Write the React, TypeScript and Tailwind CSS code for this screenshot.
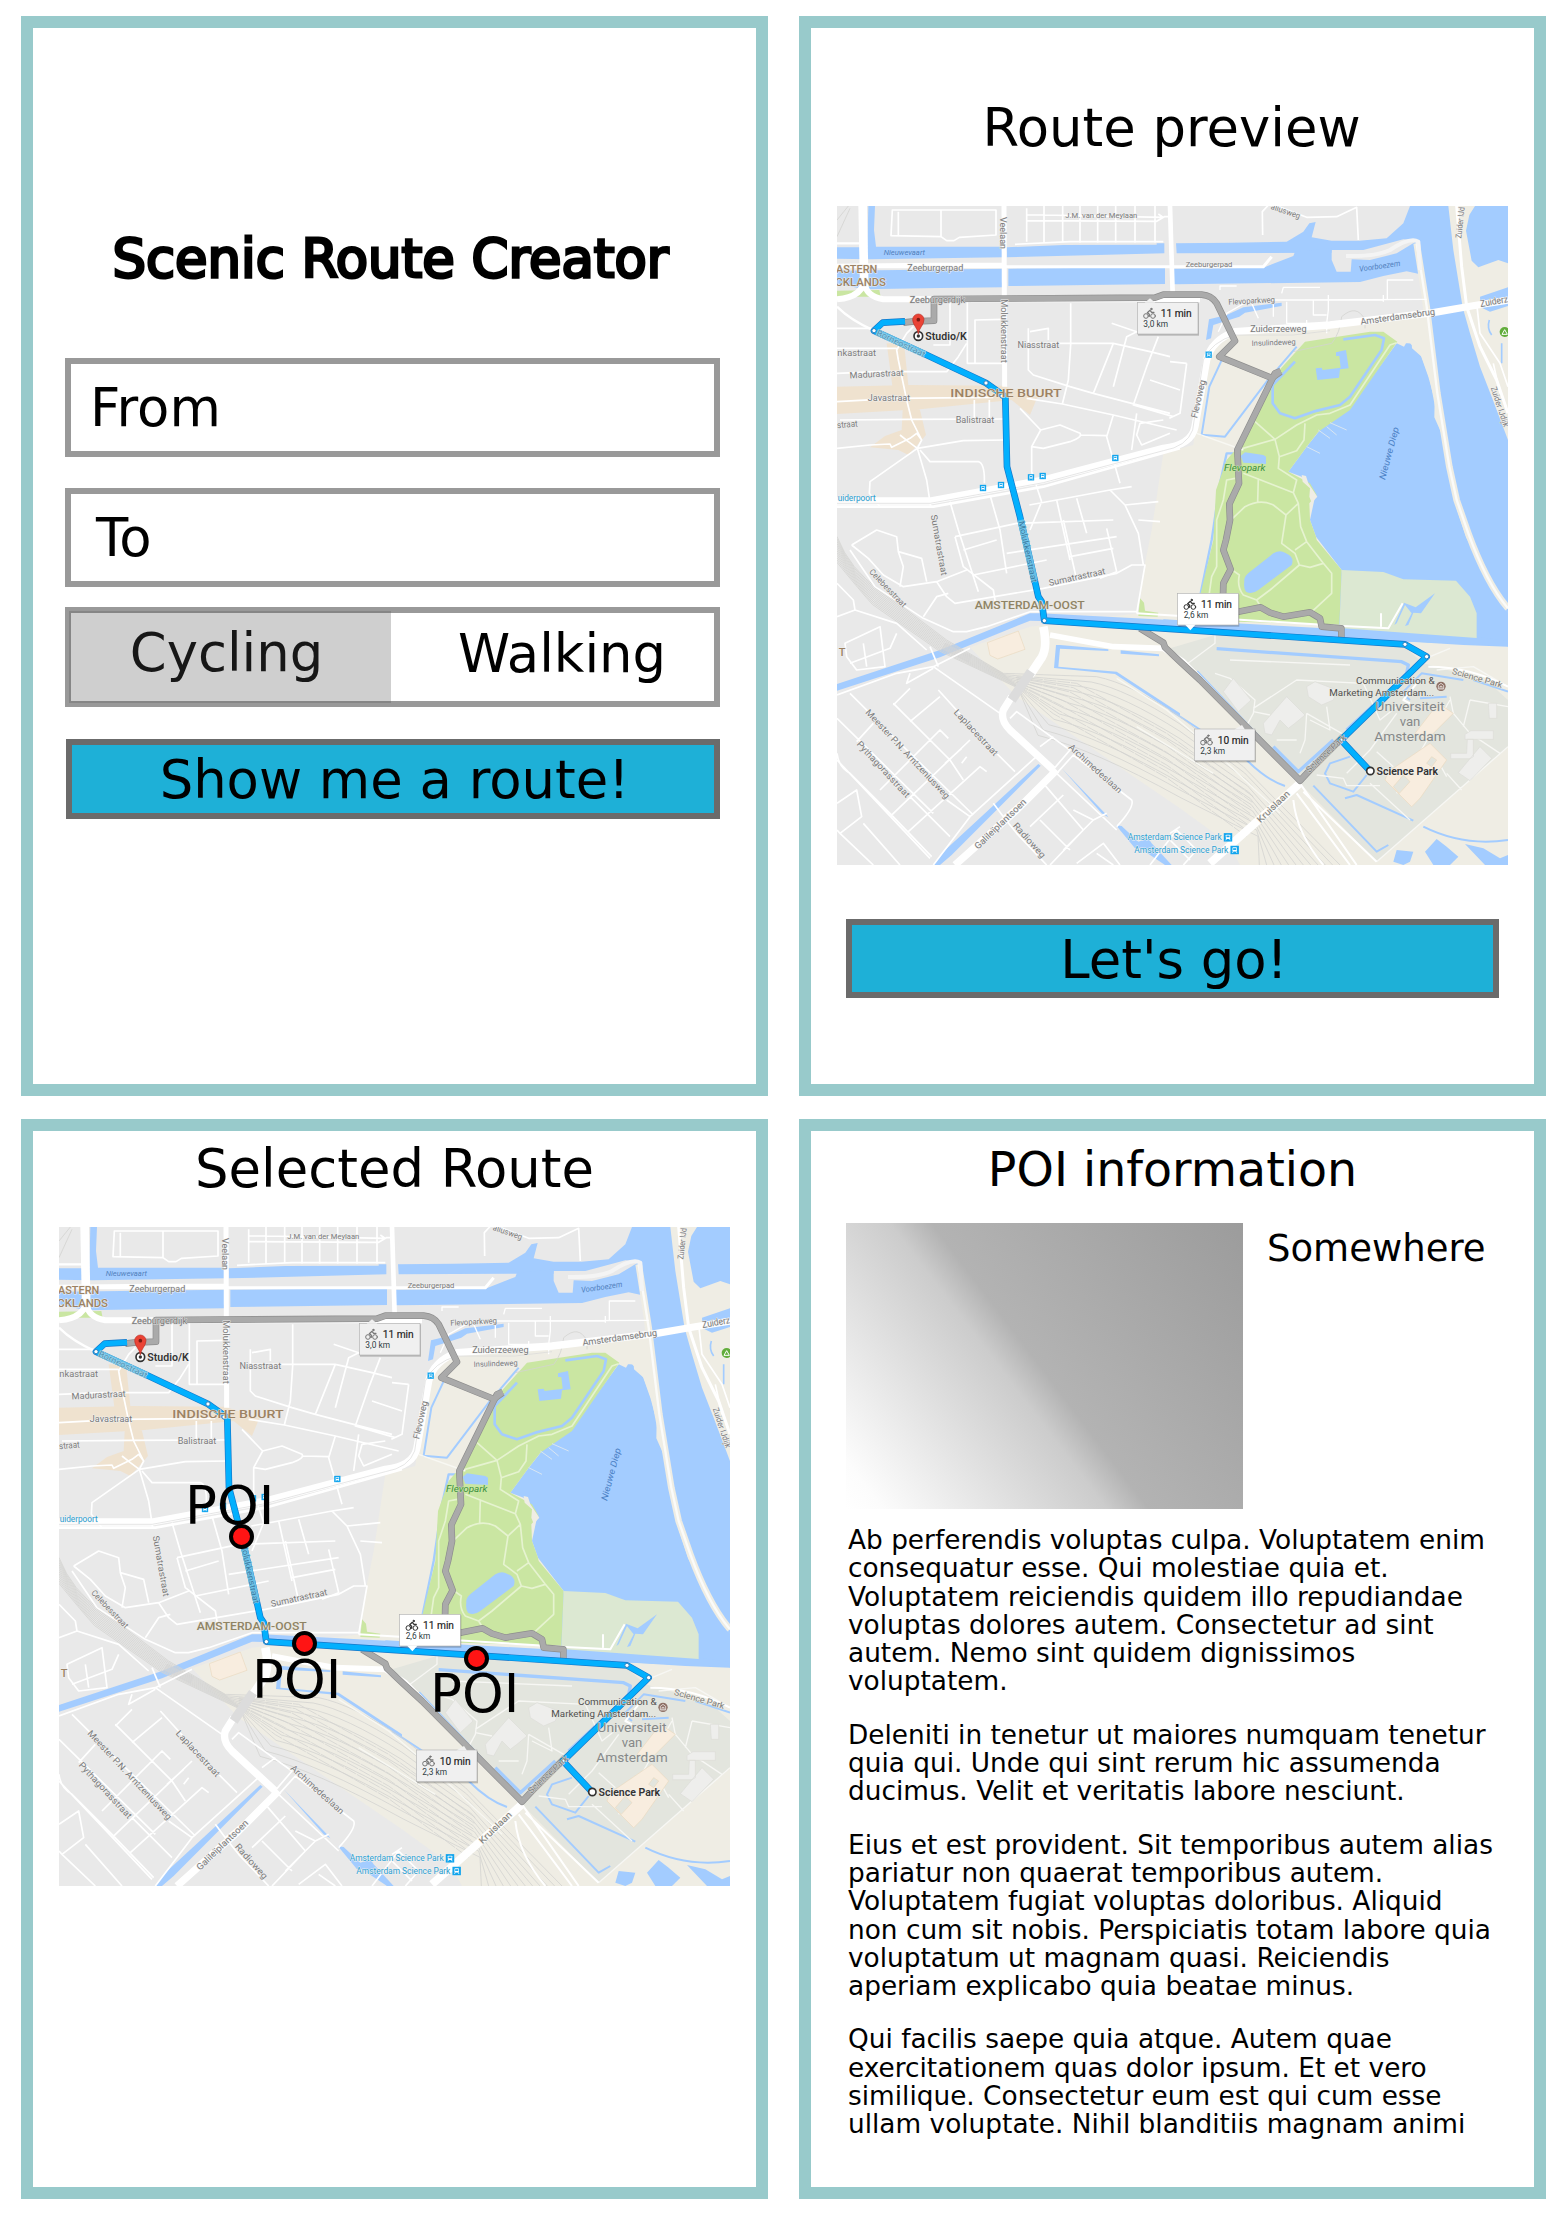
import React from 'react';

const WATER = '#a3ccff';
const BEIGE = '#efede4';
const LAND = '#e9e9e9';
const PARK = '#cae6a2';
const GREY_TEXT = '#7a7a7a';

type LabelProps = {
  x: number;
  y: number;
  w: number;
  text: string;
  size?: number;
  rot?: number;
  fill?: string;
  weight?: number;
  italic?: boolean;
  halo?: string;
};

/* A map label centred on (x, y), stretched to the width w. */
function Label({ x, y, w, text, size = 27, rot = 0, fill = GREY_TEXT, weight = 400, italic, halo = '#f0f0f0' }: LabelProps) {
  return (
    <text
      transform={`translate(${x} ${y}) rotate(${rot})`}
      textAnchor="middle"
      dominantBaseline="central"
      fontSize={size}
      fontWeight={weight}
      fontStyle={italic ? 'italic' : 'normal'}
      fill={fill}
      stroke={halo}
      strokeWidth={3}
      paintOrder="stroke"
      strokeLinejoin="round"
      textLength={w}
      lengthAdjust="spacingAndGlyphs"
    >
      {text}
    </text>
  );
}

function Bike({ x, y, color }: { x: number; y: number; color: string }) {
  return (
    <g transform={`translate(${x} ${y})`} fill="none" stroke={color} strokeWidth={3} strokeLinecap="round" strokeLinejoin="round">
      <circle cx="7" cy="23" r="7" />
      <circle cx="28" cy="23" r="7" />
      <path d="M17 24 V18 L11 13 L19 6 L24 12 H31" strokeWidth={3.8} />
      <circle cx="23" cy="2" r="2.2" fill={color} />
    </g>
  );
}

function Popup({ x, y, time, dist, active, pointer }: { x: number; y: number; time: string; dist: string; active?: boolean; pointer: string }) {
  const bg = active ? '#ffffff' : '#f0f0f0';
  return (
    <g transform={`translate(${x} ${y})`}>
      <rect x="2" y="3" width="183" height="97" fill="#000" opacity=".22" />
      <rect width="182" height="95" fill={bg} stroke="#b3b3b3" strokeWidth="2" />
      <path d={pointer} fill={bg} />
      <Bike x={19} y={18} color={active ? '#333' : '#777'} />
      <text x="70" y="45" fontSize="31" fill="#222" stroke="#222" strokeWidth=".5" textLength="93" lengthAdjust="spacingAndGlyphs">{time}</text>
      <text x="18" y="74" fontSize="25" fill="#2d3c42" textLength="74" lengthAdjust="spacingAndGlyphs">{dist}</text>
    </g>
  );
}

function Transit({ x, y, s = 18 }: { x: number; y: number; s?: number }) {
  return (
    <g transform={`translate(${x} ${y}) scale(${s / 18})`}>
      <rect x="-9.5" y="-9.5" width="19" height="19" fill="#12a5ee" />
      <rect x="-5" y="-6" width="10" height="9.5" rx="1.5" fill="#fff" />
      <rect x="-3.5" y="-4" width="7" height="3.8" fill="#12a5ee" />
      <path d="M-5 6.5 L-3 3 M5 6.5 L3 3" stroke="#fff" strokeWidth="1.8" />
    </g>
  );
}

const TRACKS = [0, 1, 2, 3, 4, 5, 6, 7, 8, 9, 10, 11];

/* Street map of Amsterdam-Oost, drawn at three units per pixel. */
function RouteMap() {
  return (
    <svg viewBox="21 18 2013 1977" width="671" height="659" className="block h-[659px] w-[671px] shrink-0 overflow-hidden" fontFamily="Roboto, sans-serif" fill="none">
      <rect x="21" y="18" width="2013" height="1977" fill={LAND} />

      {/* open ground */}
      <path fill={BEIGE} d="M1000 760 L1090 735 L1120 470 L1160 425 L1230 400 L1500 375 L1800 335 L1765 18 H2034 V1995 H1230 L1195 1930 L1050 1825 L560 1490 L420 1342 L600 1280 L925 1240 L945 1090 L965 990Z" />
      <path fill="#efe2cf" d="M21 560 L240 555 L520 557 L622 592 L600 645 L575 625 L545 600 L270 628 L21 642Z M170 430 H222 L235 555 L270 630 L288 705 L262 735 L235 765 L205 750 L120 742 L165 708 L215 690 L218 630 L190 580Z" />
      <path fill={PARK} d="M21 272 L148 270 L152 290 H21Z M930 1195 L942 1208 L945 1232 L985 1238 L983 1250 L925 1248Z" />

      {/* university campus */}
      <path fill="#e3e5de" d="M1020 1345 L1155 1305 L1720 1338 L1780 1390 L1960 1440 L1990 1460 L2034 1500 L2034 1640 L1640 1985 L1420 1760 L1380 1720Z" />

      {/* water */}
      <g fill={WATER}>
        <path d="M115 18 H135 L132 90 L138 140 H520 V172 L120 178 L21 176 V142 H112Z" />
        <path d="M530 142 L700 135 L980 134 V130 H1003 V160 L530 172Z" />
        <path d="M1038 130 L1205 128 L1370 125 L1420 95 L1438 70 L1457 66 L1445 112 L1505 122 H1588 L1670 115 L1720 70 L1740 18 H1855 L1870 150 L1898 322 L1920 400 L1950 500 L1985 590 L2034 720 V1340 L1960 1260 L1850 900 L1818 600 L1785 310 L1768 120 L1720 118 L1600 150 H1505 V158 L1040 160Z" />
        <path d="M21 212 L520 206 V262 L330 264 L100 268 L21 250Z M535 206 L1005 202 V252 L535 258Z" />
        <path d="M1040 206 L1300 203 L1390 168 L1395 155 L1505 145 V180 L1520 215 H1562 L1565 178 L1620 180 L1700 160 L1757 125 L1768 222 L1730 214 L1660 228 L1590 246 L1040 253 L1020 252 V206Z" />
        <path d="M1935 18 H2034 V190 L2005 180 L1945 202 L1925 182 L1908 92 L1918 45Z M1950 290 L2034 262 V318 L1980 335 L1952 322Z" />
        <path d="M1137 358 L1190 345 L1240 322 L1355 308 V318 L1245 338 L1228 350 L1150 375 L1143 415 L1128 420Z" />
        <path d="M1700 430 L1722 440 L1728 430 H1745 L1746 445 L1775 470 L1800 540 L1815 620 L1835 700 L1870 850 L1875 920 L1905 990 L2034 1235 V1340 L1900 1335 L1500 1310 L1535 1110 L1458 1010 L1440 960 L1455 890 L1415 830 L1375 815 L1430 740 L1470 690 L1560 620 L1620 540Z" />
        <path d="M21 1452 L330 1350 L600 1240 L630 1240 L1020 1260 L2034 1338 V1338 L1020 1292 L660 1264 L600 1262 L330 1372 L21 1472Z" />
        <path d="M1000 1258 L1940 1310 L2034 1322 V1338 L1000 1288Z" />
        <path d="M678 1335 H690 L835 1348 V1353 L690 1346 L685 1400 L860 1415 L1050 1540 V1550 L855 1422 L672 1404Z M872 1351 L987 1363 V1369 L872 1361Z" />
        <path d="M625 1692 L632 1697 L365 1965 L330 1995 H310 L340 1955Z M695 1705 L830 1845 L835 1852 L815 1840Z M858 1876 L875 1878 L925 1925 L955 1915 L965 1930 L1025 1995 H1005 L930 1945 L915 1945Z" />
        <path d="M1820 1917 L1850 1940 L1885 1970 L1860 1995 H1810 L1785 1955Z M1905 1932 L1960 1945 L2010 1975 L2034 1965 V1995 H1965Z M1700 1950 L1750 1955 L1740 1985 L1720 1995 L1690 1985Z" />
      </g>
      <g stroke={WATER} strokeWidth="8" strokeLinejoin="round">
        <path d="M1400 440 L1310 545 L1185 710 L1115 704 L1138 560 L1180 470" strokeWidth="6" />
        <path d="M1210 760 L1190 760 L1170 850 L1145 1020 L1112 1180" strokeWidth="7" />
        <path d="M1160 1346 L1715 1385 L1735 1395 L1730 1420 L1680 1470 L1550 1590 M1510 1620 L1405 1715 L1330 1640 M1100 1415 L1290 1615" strokeWidth="10" />
        <path d="M1740 1500 L1715 1480 L1775 1420 L1900 1440 M1770 1495 L1850 1490 M1930 1440 L2034 1475" strokeWidth="6" />
        <path d="M1560 1670 L1500 1690 L1485 1720 L1500 1750 L1570 1775 L1610 1725 M1545 1795 L1580 1785 L1750 1862 M1780 1880 Q1900 1940 2034 1920 M1450 1757 L1640 1955 L1675 1935 M1250 1680 Q1310 1740 1365 1758 M1020 1530 L1250 1680" strokeWidth="6" />
        <path d="M1978 360 Q1970 385 1985 405 M2015 430 V490" strokeWidth="5" />
      </g>
      {/* spit of land between both waters */}
      <path fill={BEIGE} d="M1765 120 L1785 310 L1820 560 L1850 780 L1885 900 L1925 1020 L2034 1240 L1908 1012 L1872 900 L1870 855 L1850 780 L1848 735 L1830 690 L1813 652 L1814 600 L1795 530 L1770 460 L1740 430 L1700 425 L1640 395 L1780 345Z" />
      <path d="M1760 130 L1790 320 L1822 580 L1858 800 L1880 900 L1915 1000 Q1970 1150 2034 1225" stroke={BEIGE} strokeWidth="20" />
      <path d="M1760 130 L1790 320 L1822 580 L1858 800 L1880 900 L1915 1000 Q1970 1150 2034 1225" stroke="#fbfbf9" strokeWidth="7" />

      {/* parks */}
      <path fill={PARK} d="M1425 425 L1620 395 L1660 395 L1702 425 L1560 630 L1465 695 L1430 740 L1375 815 L1440 850 L1460 885 L1438 910 L1440 960 L1458 1010 L1460 1020 L1535 1110 L1528 1275 L1225 1265 L1112 1180 L1150 1020 L1158 870 L1190 780 L1220 745 L1320 560 L1330 530Z" />
      <path fill="#dce8d2" d="M1535 1110 L1660 1116 L1720 1138 L1878 1142 L1920 1190 L1940 1240 V1314 L1528 1284Z" />
      <g fill={WATER}>
        <path d="M1518 457 L1548 450 L1556 505 L1530 508 L1527 533 L1462 540 L1457 505 L1475 503 L1478 510 L1532 503 L1528 468 L1518 468Z" />
        <path d="M1232 768 L1245 757 L1300 765 L1308 770 V792 L1240 788Z" />
        <path d="M1243 1145 Q1240 1130 1260 1115 L1330 1060 Q1350 1048 1365 1058 Q1395 1070 1385 1095 L1285 1170 Q1265 1185 1248 1175 Q1240 1165 1243 1145Z" />
        <path d="M1722 1208 L1757 1222 L1815 1180 L1773 1240 L1750 1238 L1735 1275 L1725 1278 L1745 1240 L1725 1215 L1700 1270 L1693 1275Z" />
      </g>
      <path fill={BEIGE} d="M1415 825 L1428 828 L1435 850 L1462 890 L1445 908 L1438 890 L1440 865 L1418 845Z" />
      <path d="M1540 418 L1635 405 L1662 415 L1655 450 L1560 590 L1530 615 L1450 635 L1395 655 L1350 640 L1328 610 L1328 555 L1395 485" stroke={WATER} strokeWidth="8" strokeLinejoin="round" />
      <g stroke="#e6f3d0" strokeWidth="5" strokeLinejoin="round">
        <path d="M1700 428 L1680 435 L1560 615 L1500 640 L1460 645 L1400 675 L1335 718 L1228 748 M1275 665 L1335 718 L1348 770 L1400 752 L1422 720 L1425 670 M1348 770 L1345 805 L1400 840 L1390 878 L1240 820 M1285 835 L1283 905 M1390 878 L1405 910 L1368 945 L1330 915 Q1290 895 1245 920 L1208 955 M1405 910 L1412 980 L1430 1025 L1480 1090 L1505 1120 V1180 L1440 1240 M1368 945 L1355 1030 L1395 1060 L1408 1095 L1320 1170 L1280 1200 L1240 1185 Q1220 1160 1228 1125 L1200 1105 M1408 1095 L1440 1102 L1480 1090 M1395 1050 L1430 1025 M1215 835 L1190 840 L1180 900 L1160 960 V1100 L1145 1130 L1138 1180 M1280 1200 L1295 1225" />
        <path d="M1465 690 L1500 715 M1490 680 L1520 705 M1500 668 L1550 690 M1430 740 L1470 760" stroke="#d9e6f2" strokeWidth="3" />
      </g>

      {/* railway yard */}
      <g stroke="#d3d3d1" strokeWidth="2.4">
        {TRACKS.map((i) => (
          <path
            key={i}
            d={`M21 ${1010 + i * 7} Q${60 + i * 3} ${1110 + i * 6} ${150 - i * 2} ${1170 + i * 4} L${350 - i * 2} ${1320 + i * 3} L${520 + i * 4} ${1420 + i * 4} L${800 - i * 16} ${1430 + i * 16} Q${900 - i * 10} ${1450 + i * 18} 1050 ${1550 + i * 22} L${1240 + i * 4} ${1700 + i * 19} L${1530 - i * 22} 1995`}
          />
        ))}
        {TRACKS.slice(0, 8).map((i) => (
          <path key={i} d={`M560 ${1430 + i * 4} L${740 - i * 10} ${1450 + i * 13} L1010 ${1600 + i * 19} L${1270 - i * 3} ${1790 + i * 17}`} strokeDasharray="38 3" />
        ))}
        <path d="M1390 455 L1505 430 Q1530 400 1535 350 Q1580 310 1605 360 V385 M21 60 L55 18 M21 110 L60 25" />
      </g>
      <path d="M340 1338 L420 1378" stroke="#d3d3d3" strokeWidth="22" opacity=".5" />

      {/* minor streets */}
      <g stroke="#fff" strokeWidth="5" strokeLinejoin="round">
        <path d="M185 30 H498 V105 L388 112 L372 122 H350 L333 110 L183 107 L187 30 M333 110 V30 M205 35 V108 M590 45 H640 L1000 52 L985 42 M590 62 L980 64 L1003 50 H1020 M590 25 V125 M642 18 V128 M698 18 V128 M750 18 V128 M803 18 V128 M857 18 V128 M915 18 V128 M975 18 V128 M555 133 L720 125 H1000" />
        <path d="M1298 105 L1297 35 L1320 10 L1430 52 L1520 50 L1580 22 L1585 120" />
        <path d="M21 385 H125 M21 445 H200 M21 520 L150 515 H300 L350 515 L385 470 L410 430 M21 605 L200 595 L490 592 M30 660 L240 658 L520 657 M21 745 L120 735 L180 732 L185 742 L240 715 L260 700 L275 720 L262 745 L235 725 L210 705 M262 745 L400 722 L525 720 M275 720 L245 660 L230 600 L205 480 L200 450 L230 400 L250 380" />
        <path d="M262 745 L120 845 L118 880 L150 920 M262 745 L290 840 L302 920 M270 750 L300 785 H445 Q465 790 463 850 M360 305 V435 H310 M412 305 V490 H520 M435 490 V360 L520 358 M433 600 V655 M478 600 V655 M600 395 L655 385 V420 M595 385 V510 L610 525 L720 560 L790 580 L850 430 L735 430 L600 430 M722 310 L722 435 L715 540 L697 612 L850 645 L1040 690 M697 612 L590 595 M570 625 L632 690 L690 675 L750 700 Q758 712 720 725 L640 745 L605 740 M632 690 L605 740 V815 L635 905 M750 705 L830 707 M850 645 L830 710 L870 850 M850 430 L960 455 L1020 470 M790 580 L1020 640 M920 640 L905 750 M845 370 L920 395 L890 410 L850 560 M985 410 L950 500 L910 615 L1030 650 M960 540 L1050 570 M1000 660 L930 670 L920 705 L935 735 L1020 700 M1070 490 L1050 640 L1018 655 M1020 485 L1070 490" />
        <path d="M598 915 L680 900 L840 870 L905 860 M680 900 L720 1080 M740 895 L770 1000 M635 905 L600 990 M840 870 L885 915 L925 1000 L940 1095 M885 915 L985 905 M925 960 L990 965 M480 885 L510 990 L530 1120 M360 905 L385 990 L445 1175 M375 1010 L560 970 L850 960 M400 1050 L500 1020 M430 1125 L650 1080 M530 1060 L860 1010 M700 960 L740 1140 M830 985 L860 1115 L810 1135 M720 1070 L850 1045" />
        <path d="M65 1035 L115 1075 L160 1125 L220 1160 L320 1145 L410 1110 M65 1035 L140 990 L200 1010 L205 1055 L275 1075 L290 1145 M205 1055 L220 1100 L210 1160 M320 1145 L350 1190 L375 1210 L640 1165 L860 1120 L905 1095 H945 L920 1240 M280 1250 L320 1190 L355 1180 M375 1010 L400 1100 L490 1170 L500 1230 M60 1050 L135 1160 L280 1255 L370 1295 H410 L470 1280 L600 1235 H920" />
        <path d="M21 1150 L70 1200 L75 1230 L21 1250 M75 1230 L200 1270 L290 1350 M45 1330 L150 1280 L165 1400 L80 1410 L50 1370Z M60 1390 L180 1345 L200 1300 M100 1330 L110 1400 M21 1485 L200 1420 L310 1400 L420 1345 M300 1340 L325 1400 M240 1420 L230 1450 L310 1405" />
        <path d="M310 1400 L510 1540 M21 1555 L310 1840 M60 1480 L200 1620 L430 1845 M190 1510 L360 1680 L400 1740 M240 1565 L330 1490 M325 1470 L470 1630 L555 1715 M21 1660 Q25 1700 60 1720 L180 1840 L305 1970 M21 1680 L300 1975 M21 1810 L80 1770 L95 1850 L30 1900 M30 1900 L130 1995 M30 1900 L21 1890 M100 1870 L210 1995 M190 1515 L240 1465 M80 1625 L130 1570 M345 1690 L395 1645 M150 1770 L330 1590 L355 1615 M180 1850 L420 1620 M235 1895 L450 1700 L470 1715 M240 1790 L360 1910 M350 1800 L420 1850 L630 1660 M395 1690 L410 1670 M310 1995 L420 1850 M490 1810 L520 1850 L560 1900 L650 1995 M520 1850 L640 1750 L760 1890 L660 1995 M640 1750 L640 1760 M600 1880 L700 1785 M630 1860 L720 1950 M660 1720 L720 1650 L650 1600 L560 1535 L540 1555 M630 1640 L670 1610 M680 1720 L730 1665 L905 1800 Q915 1820 860 1880 M680 1720 L860 1890 M730 1830 L790 1860 L700 1950 M790 1860 L830 1840 M740 1990 L820 1930 L870 1995 M960 1995 L1040 1890 L1100 1950 L1060 1995 M1020 1920 L1080 1980 M800 1960 L850 1995 M1050 1880 L1020 1900" />
        <path d="M1165 395 L1190 340 L1260 300 H1400 L1790 298 M1170 270 V258 H1220 M1355 280 L1360 262 H1470 M1672 300 V240 H1750 M1660 285 V305 M1495 285 V330 L1490 370 H1370 V305 M1450 300 V345 H1490 M1430 370 V360 M1265 310 L1285 355 M1330 310 V350 M1490 370 V400" strokeWidth="4" />
        <path d="M1548 168 Q1640 170 1680 150 Q1740 110 1765 125 L1770 210" strokeWidth="12" stroke="#f4f4f4" />
        <path d="M1155 1420 L1200 1435 L1275 1500 L1270 1540 L1210 1650 M1270 1525 L1400 1440 L1600 1450 M1270 1535 L1320 1545 M1200 1380 L1560 1395 M1155 1300 V1330 L1060 1400 M1430 1540 L1535 1600 M1490 1520 L1500 1590 L1440 1560 M1430 1540 L1425 1620 L1410 1660 M1600 1450 L1650 1560 L1700 1520 M1340 1620 L1400 1620 M1820 1410 L1930 1400 L2034 1460 M1800 1370 L1860 1345 M1860 1490 L1870 1540 L1920 1600 L2010 1660 M1920 1500 L1900 1580 M1920 1500 L2034 1520 M1640 1985 L2034 1640 M1550 1720 L1620 1650 L1700 1540 M1640 1655 L1690 1700 M1620 1750 L1740 1860 M1700 1780 L1860 1500 M1460 1725 L1540 1735 L1550 1757 H1650 M1850 1720 L1895 1770 M1800 1640 L1850 1730" strokeWidth="4" stroke="#f7f7f4" />
        <path d="M1410 1750 L1580 1995 M1400 1780 L1560 1995 M1420 1775 L1640 1985 M1390 1800 Q1400 1900 1480 1995 M920 1240 L1540 1278 L1675 1285 L1718 1210 M1653 1240 V1280 M1795 1400 Q1920 1400 2034 1460 M1760 1450 L1720 1500 L1740 1510" strokeWidth="6" />
        <path d="M1940 310 L1950 400 L2010 490 L2034 560 M1990 490 L2010 580" />
        <path d="M1100 700 L1240 750 M920 1580 L1150 1720 M860 1435 L1010 1530 L1150 1650 L1350 1840" stroke="#f8f8f3" strokeWidth="4" />
      </g>
      {/* main roads */}
      <g stroke="#fff" strokeLinejoin="round">
        <path d="M98 18 L103 270" strokeWidth="26" />
        <path d="M103 230 Q105 290 21 298 M103 250 Q110 290 160 298 H1110" strokeWidth="18" />
        <path d="M21 320 Q60 360 132 392 M21 130 H100" strokeWidth="7" />
        <path d="M522 18 L524 560" strokeWidth="15" />
        <path d="M1020 18 L1028 280" strokeWidth="14" />
        <path d="M21 200 H1300 L1325 170 M21 196 L300 193 H520" strokeWidth="9" />
        <path d="M21 903 H300 L640 840 L1000 745 Q1085 735 1095 680 L1130 480 Q1145 420 1215 395 L1500 375 L1810 338 L1925 318 L2034 300" strokeWidth="22" />
        <path d="M21 920 H310 L640 860 L1050 745" strokeWidth="8" />
        <path d="M1880 18 L1895 200 L1910 320 L1950 440 L2000 540 L2034 640" strokeWidth="9" />
        <path d="M640 1280 Q655 1350 630 1380 L600 1425" strokeWidth="26" />
        <path d="M660 1305 L850 1340 L1000 1345 L1060 1385 L1410 1745" strokeWidth="17" />
        <path d="M545 1490 L520 1530 Q510 1560 540 1590 L670 1710" strokeWidth="22" />
        <path d="M680 1710 L560 1830 L375 1995" strokeWidth="22" />
        <path d="M1410 1750 L1140 1990" strokeWidth="24" />
      </g>
      <path d="M603 1415 L545 1500" stroke="#dcdcdc" strokeWidth="28" />
      <path d="M21 910 H300 L640 848 L1000 752 Q1070 740 1088 690 L1120 480 Q1145 425 1215 405 L1390 405 L1500 392" stroke="#d9d9d9" strokeWidth="2" />

      {/* campus buildings */}
      <g fill="#eeeeec" stroke="#dcdcd8" strokeWidth="2">
        <path d="M1210 1435 L1263 1500 L1225 1535 L1180 1475Z M1300 1570 L1370 1490 L1410 1530 L1425 1545 L1395 1570 L1375 1585 L1350 1560 L1325 1605 L1305 1600Z M1430 1460 L1455 1445 L1520 1470 L1510 1500 L1475 1515 L1435 1490Z M1975 1510 H2000 V1555 H1978Z M1923 1592 H1990 V1618 H1905 V1603Z M1912 1618 H1930 V1670 L1920 1676 H1862 V1660 H1910Z M1950 1640 L1985 1675 L1920 1742 L1885 1718Z" />
      </g>
      <g fill="#f8eddf" stroke="#ead9c0" strokeWidth="2">
        <path d="M472 1328 L565 1293 L585 1348 L503 1377 L480 1366Z M1825 1510 L1870 1540 L1790 1620 L1755 1600Z M1800 1630 L1850 1680 L1770 1795 L1745 1820 L1665 1740 L1675 1715Z" />
      </g>
      <path fill="#e3e5de" stroke="#ead9c0" strokeWidth="2" d="M1790 1690 L1805 1670 L1820 1680 L1805 1700Z M1690 1760 L1720 1725 L1740 1745 L1708 1780Z" />

      {/* alternative routes */}
      <g strokeLinejoin="round">
        <g stroke="#8d8d8d" strokeWidth="20">
          <path d="M220 368 L245 365 L312 362 V297 L975 293 L1000 284 H1115 Q1145 286 1160 310 L1215 423 L1168 470 L1325 534 L1352 515" />
          <path d="M1352 513 L1335 520 L1222 750 L1227 850 L1198 912 L1200 960 L1188 1020 L1180 1050 L1202 1108 L1180 1150 L1178 1235 H1225 L1292 1222 L1320 1238 L1360 1250 L1440 1237 L1470 1255 L1475 1280 L1534 1285 V1315" />
          <path d="M930 1285 L1000 1328 L1005 1342 L1050 1385 L1110 1440 L1410 1742 L1440 1710 L1540 1610" />
        </g>
        <g stroke="#aaaaaa" strokeWidth="16">
          <path d="M220 368 L245 365 L312 362 V297 L975 293 L1000 284 H1115 Q1145 286 1160 310 L1215 423 L1168 470 L1325 534 L1352 515" />
          <path d="M1352 513 L1335 520 L1222 750 L1227 850 L1198 912 L1200 960 L1188 1020 L1180 1050 L1202 1108 L1180 1150 L1178 1235 H1225 L1292 1222 L1320 1238 L1360 1250 L1440 1237 L1470 1255 L1475 1280 L1534 1285 V1315" />
          <path d="M930 1285 L1000 1328 L1005 1342 L1050 1385 L1110 1440 L1410 1742 L1440 1710 L1540 1610" />
        </g>
      </g>
      {/* chosen route */}
      <g strokeLinejoin="round">
        <g stroke="#1577c9" strokeWidth="20">
          <path d="M225 364 L158 368 L132 392 L290 465 L468 549 L526 590 L531 800 L570 950 L615 1145 L625 1190 L635 1205 L643 1262 L1725 1333 L1790 1370 L1533 1620 L1620 1713" />
        </g>
        <g stroke="#03b0fe" strokeWidth="16">
          <path d="M225 364 L158 368 L132 392 L290 465 L468 549 L526 590 L531 800 L570 950 L615 1145 L625 1190 L635 1205 L643 1262 L1725 1333 L1790 1370 L1533 1620 L1620 1713" />
        </g>
        <path d="M140 396 L285 463 M572 960 L613 1140" stroke="#62bfe6" strokeWidth="20" />
      </g>
      <g fill="#fff" stroke="#2a7fc0" strokeWidth="3">
        <circle cx="132" cy="392" r="6.5" />
        <circle cx="468" cy="549" r="6.5" />
        <circle cx="516" cy="588" r="6.5" />
        <circle cx="643" cy="1262" r="6.5" />
        <circle cx="1725" cy="1333" r="6.5" />
        <circle cx="1790" cy="1370" r="6.5" />
        <circle cx="1533" cy="1620" r="6.5" />
      </g>

      {/* street names */}
      <Label x={322} y={300} w={166} text="Zeeburgerdijk" halo="#dcdcdc" />
      <Label x={814} y={46} w={216} text="J.M. van der Meylaan" size={24} />
      <Label x={520} y={99} w={96} text="Veelaan" rot={90} />
      <Label x={223} y={157} w={124} text="Nieuwevaart" size={23} italic fill="#5180bd" halo="#a3ccff" />
      <Label x={316} y={203} w={168} text="Zeeburgerpad" />
      <Label x={1137} y={193} w={140} text="Zeeburgerpad" size={24} />
      <Label x={1649} y={199} w={124} text="Voorboezem" size={24} rot={-8} italic fill="#5180bd" halo="#a3ccff" />
      <Label x={1367} y={33} w={92} text="aliusweg" size={25} rot={19} />
      <Label x={1265} y={303} w={140} text="Flevoparkweg" size={24} rot={-3} />
      <Label x={1345} y={387} w={169} text="Zuiderzeeweg" />
      <Label x={1331} y={428} w={132} text="Insulindeweg" size={23} rot={-2} />
      <Label x={1703} y={350} w={225} text="Amsterdamsebrug" rot={-8} />
      <Label x={1992} y={303} w={84} text="Zuiderz" size={28} rot={-10} />
      <Label x={1890} y={68} w={94} text="Zuider IJd" size={25} rot={-84} />
      <Label x={2010} y={620} w={125} text="Zuider IJdijk" size={25} rot={72} />
      <Label x={523} y={393} w={190} text="Molukkenstraat" rot={90} />
      <Label x={213} y={430} w={158} text="Borneostraat" size={25} rot={25} fill="#4b8fb1" halo="#a5d9ef" />
      <Label x={80} y={460} w={116} text="nkastraat" />
      <Label x={140} y={522} w={162} text="Madurastraat" rot={-3} />
      <Label x={177} y={594} w={127} text="Javastraat" />
      <Label x={52} y={673} w={62} text="straat" rot={-5} />
      <Label x={435} y={660} w={116} text="Balistraat" />
      <Label x={625} y={435} w={125} text="Niasstraat" />
      <Label x={1105} y={597} w={116} text="Flevoweg" rot={-77} />
      <Label x={327} y={1035} w={185} text="Sumatrastraat" rot={80} />
      <Label x={594} y={1055} w={188} text="Molukkenstraat" size={25} rot={78} fill="#3979a1" halo="#78c9ec" />
      <Label x={741} y={1131} w={172} text="Sumatrastraat" rot={-12} />
      <Label x={174} y={1164} w={148} text="Celebesstraat" size={25} rot={46} />
      <Label x={438} y={1598} w={180} text="Laplacestraat" rot={47} />
      <Label x={233} y={1662} w={356} text="Meester P.N. Arntzeniusweg" rot={47} />
      <Label x={160} y={1708} w={220} text="Pythagorasstraat" rot={47} />
      <Label x={796} y={1706} w={205} text="Archimedeslaan" rot={42} />
      <Label x={511} y={1872} w={204} text="Galileïplantsoen" rot={-44} />
      <Label x={598} y={1921} w={132} text="Radioweg" rot={48} />
      <Label x={1330} y={1820} w={125} text="Kruislaan" rot={-44} halo="#efede4" />
      <Label x={1488} y={1660} w={154} text="Science Park" size={25} rot={-43} halo="#d0d4d2" />
      <Label x={1942} y={1434} w={156} text="Science Park" size={26} rot={16} halo="#efede4" />
      <Label x={1677} y={760} w={162} text="Nieuwe Diep" rot={-75} italic fill="#4b80c5" halo="#a3ccff" />
      <Label x={1244} y={801} w={124} text="Flevopark" size={28} italic fill="#3b8f3e" halo="#cae6a2" />
      <Label x={80} y={894} w={114} text="uiderpoort" size={26} fill="#2ba0d3" />
      <Label x={1034} y={1911} w={282} text="Amsterdam Science Park" size={26} fill="#2ba0d3" halo="#f2f2f2" />
      <Label x={1054} y={1950} w={282} text="Amsterdam Science Park" size={26} fill="#2ba0d3" halo="#f2f2f2" />

      {/* district names */}
      <Label x={80} y={209} w={124} text="ASTERN" size={33} weight={500} fill="#9c8263" />
      <Label x={92} y={248} w={152} text="CKLANDS" size={33} weight={500} fill="#9c8263" />
      <Label x={528} y={578} w={334} text="INDISCHE BUURT" size={34} weight={500} fill="#9c8263" halo="#efe8dd" />
      <Label x={599} y={1217} w={330} text="AMSTERDAM-OOST" size={33} weight={500} fill="#8e8365" halo="#edeae0" />
      <Label x={36} y={1357} w={20} text="T" size={33} weight={500} fill="#9c8263" />

      {/* places */}
      <Label x={1696} y={1442} w={236} text="Communication &" size={28} fill="#50504f" halo="#e6e7e1" />
      <Label x={1655} y={1477} w={314} text="Marketing Amsterdam..." size={28} fill="#50504f" halo="#e6e7e1" />
      <Label x={1740} y={1518} w={208} text="Universiteit" size={39} fill="#858989" halo="#e6e7e1" />
      <Label x={1740} y={1564} w={62} text="van" size={39} fill="#858989" halo="#e6e7e1" />
      <Label x={1740} y={1609} w={214} text="Amsterdam" size={39} fill="#858989" halo="#e6e7e1" />
      <circle cx="1833" cy="1459" r="14" fill="#8d6f64" />
      <path d="M1825 1467 V1456 L1833 1450 L1841 1456 V1467Z M1830 1467 V1459 H1836 V1467" stroke="#fff" strokeWidth="2" />
      <circle cx="2024" cy="396" r="15" fill="#62ad3c" />
      <path d="M2016 403 L2024 389 L2032 403Z" stroke="#fff" strokeWidth="3" />

      <Transit x={459} y={864} />
      <Transit x={513} y={855} />
      <Transit x={603} y={832} />
      <Transit x={638} y={828} />
      <Transit x={856} y={774} />
      <Transit x={1136} y={464} />
      <Transit x={1194} y={1912} s={24} />
      <Transit x={1214} y={1950} s={24} />

      {/* start and destination */}
      <circle cx="265" cy="408" r="13" fill="#fff" stroke="#333" strokeWidth="5" />
      <circle cx="265" cy="408" r="5" fill="#333" />
      <path d="M265 402 C263 383 248 375 248 359 A17 17 0 0 1 282 359 C282 375 267 383 265 402Z" fill="#ea4335" stroke="#b93127" strokeWidth="2" />
      <circle cx="265" cy="359" r="5.5" fill="#7b1a12" />
      <Label x={348} y={408} w={124} text="Studio/K" size={30} weight={600} fill="#333" />
      <circle cx="1621" cy="1713" r="11" fill="#fff" stroke="#333" strokeWidth="5" />
      <Label x={1732} y={1713} w={185} text="Science Park" size={30} weight={600} fill="#333" halo="#f0f0ec" />

      <Popup x={922} y={307} time="11 min" dist="3,0 km" pointer="M22 1.5 L38 -12 L54 1.5Z" />
      <Popup x={1043} y={1180} time="11 min" dist="2,6 km" active pointer="M22 93.5 L38 111 L54 93.5Z" />
      <Popup x={1093} y={1587} time="10 min" dist="2,3 km" pointer="M120 1.5 L143 -12 L152 1.5Z" />
    </svg>
  );
}

function Panel({ className, children }: { className: string; children: React.ReactNode }) {
  return <section className={`flex h-[1080px] w-[747px] flex-col border-12 border-[#98cacb] bg-white ${className}`}>{children}</section>;
}

/* A point of interest: a red dot with a caption above or below it. */
function Poi({ dot, text }: { dot: string; text: string }) {
  return (
    <>
      <span className={`absolute size-[25px] rounded-full border-4 border-black bg-[#ff1414] ${dot}`} />
      <span className={`absolute text-[53px] leading-[60px] ${text}`}>POI</span>
    </>
  );
}

const PARAGRAPHS = [
  [
    'Ab perferendis voluptas culpa. Voluptatem enim',
    'consequatur esse. Qui molestiae quia et.',
    'Voluptatem reiciendis quidem illo repudiandae',
    'voluptas dolores autem. Consectetur ad sint',
    'autem. Nemo sint quidem dignissimos',
    'voluptatem.',
  ],
  ['Deleniti in tenetur ut maiores numquam tenetur', 'quia qui. Unde qui sint rerum hic assumenda', 'ducimus. Velit et veritatis labore nesciunt.'],
  [
    'Eius et est provident. Sit temporibus autem alias',
    'pariatur non quaerat temporibus autem.',
    'Voluptatem fugiat voluptas doloribus. Aliquid',
    'non cum sit nobis. Perspiciatis totam labore quia',
    'voluptatum ut magnam quasi. Reiciendis',
    'aperiam explicabo quia beatae minus.',
  ],
  [
    'Qui facilis saepe quia atque. Autem quae',
    'exercitationem quas dolor ipsum. Et et vero',
    'similique. Consectetur eum est qui cum esse',
    'ullam voluptate. Nihil blanditiis magnam animi',
  ],
];

export default function App() {
  return (
    <main className="grid h-[2217px] w-[1568px] grid-cols-[747px_747px] grid-rows-[1080px_1080px] gap-x-[31px] gap-y-[23px] overflow-hidden bg-white pt-4 pl-[21px] font-['DejaVu_Sans',sans-serif] text-[52.8px] leading-[60px] whitespace-nowrap text-black">
      <Panel className="px-8 pt-[201px]">
        <h1 className="pr-[8px] text-center font-normal [-webkit-text-stroke:3px_#000]">Scenic Route Creator</h1>
        <div className="mt-[69px] flex h-[99px] w-[655px] items-center border-6 border-[#999] pl-[19px]">From</div>
        <div className="mt-[31px] flex h-[99px] w-[655px] items-center border-6 border-[#999] pl-[25px]">To</div>
        <div className="mt-5 flex h-[100px] w-[655px] border-6 border-[#999]">
          <div className="-my-[2px] -ml-[2px] flex w-[322px] items-center justify-center border-y-2 border-l-2 border-[#868686] bg-[#cfcfcf] pr-[9px] pb-[9px] text-[#171717]">Cycling</div>
          <div className="flex flex-1 items-center justify-center pb-[6px] pl-[19px]">Walking</div>
        </div>
        <button className="mt-8 ml-px h-[80px] w-[654px] border-6 border-[#6b6b6b] bg-[#1eb0d7] pt-[2px] pl-[3px] text-center">Show me a route!</button>
      </Panel>

      <Panel className="pt-[70px]">
        <h2 className="pr-[2px] text-center">Route preview</h2>
        <div className="mt-[48px] ml-[26px]">
          <RouteMap />
        </div>
        <button className="mt-[54px] ml-[35px] h-[79px] w-[653px] border-6 border-[#6b6b6b] bg-[#1eb0d7] pt-[2px] pl-[3px] text-center">Let's go!</button>
      </Panel>

      <Panel className="pt-[8px]">
        <h2 className="text-center">Selected Route</h2>
        <div className="relative mt-[28px] ml-[26px] w-[671px]">
          <RouteMap />
          <Poi dot="left-[170px] top-[297px]" text="left-[126px] top-[249px]" />
          <Poi dot="left-[233px] top-[404px]" text="left-[193px] top-[423px]" />
          <Poi dot="left-[405px] top-[419px]" text="left-[371px] top-[437px]" />
        </div>
      </Panel>

      <Panel className="pt-[9px]">
        <h2 className="text-center text-[47.5px]">POI information</h2>
        <div className="mt-[23px] flex items-start pl-[35px]">
          <div className="h-[286px] w-[397px] bg-[linear-gradient(52.75deg,#ffffff_0%,#fcfcfc_6%,#cccccc_42.5%,#b3b3b3_49.3%,#9c9c9c_100%)]" />
          <p className="ml-[24px] pt-px text-[37px] leading-[50px]">Somewhere</p>
        </div>
        <div className="mt-[17px] flex flex-col gap-[25px] pl-[37px] text-[26.37px] leading-[28.3px]">
          {PARAGRAPHS.map((lines) => (
            <p key={lines[0]}>
              {lines.map((line) => (
                <span key={line} className="block">
                  {line}
                </span>
              ))}
            </p>
          ))}
        </div>
      </Panel>
    </main>
  );
}
